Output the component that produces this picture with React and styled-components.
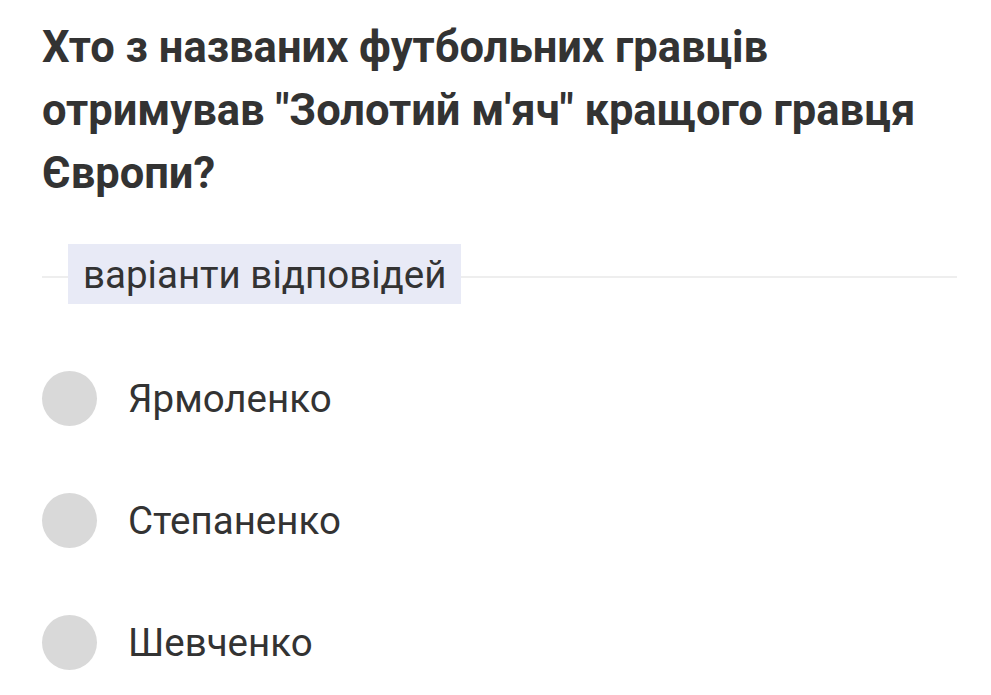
import styled, { createGlobalStyle } from "styled-components";

const GlobalStyle = createGlobalStyle`
  body {
    margin: 0;
    background: #fff;
    font-family: Roboto, "Noto Sans", sans-serif;
    color: #333;
  }
`;

const options = ["Ярмоленко", "Степаненко", "Шевченко"];

const App = () => {
  return (
    <>
      <GlobalStyle />
      <Page>
        <Question>
          Хто з названих футбольних гравців отримував "Золотий м'яч" кращого
          гравця Європи?
        </Question>
        <Divider>
          <DividerLabel>варіанти відповідей</DividerLabel>
        </Divider>
        <OptionList>
          {options.map((name) => (
            <Option key={name}>
              <Radio />
              <OptionText>{name}</OptionText>
            </Option>
          ))}
        </OptionList>
      </Page>
    </>
  );
};

export default App;

const Page = styled.div`
  padding: 16px 34px 0 42px;
`;

const Question = styled.h1`
  margin: 0;
  font-size: 43.5px;
  font-weight: 700;
  line-height: 63px;
  color: #333;
`;

const Divider = styled.div`
  position: relative;
  margin-top: 39px;
  height: 60px;
  display: flex;
  align-items: center;

  &::before {
    content: "";
    position: absolute;
    left: 0;
    right: 0;
    top: 32px;
    height: 2px;
    background: #eeeeee;
  }
`;

const DividerLabel = styled.span`
  position: relative;
  margin-left: 26px;
  height: 60px;
  padding: 0 15px;
  display: flex;
  align-items: center;
  background: #e8eaf6;
  font-size: 38.5px;
  color: #333;
`;

const OptionList = styled.div`
  margin-top: 67px;
  display: flex;
  flex-direction: column;
  gap: 67px;
`;

const Option = styled.label`
  display: flex;
  align-items: center;
  gap: 31px;
  height: 55px;
`;

const Radio = styled.span`
  width: 55px;
  height: 55px;
  border-radius: 50%;
  background: #d9d9d9;
  flex-shrink: 0;
`;

const OptionText = styled.span`
  font-size: 38.5px;
  color: #333;
`;
